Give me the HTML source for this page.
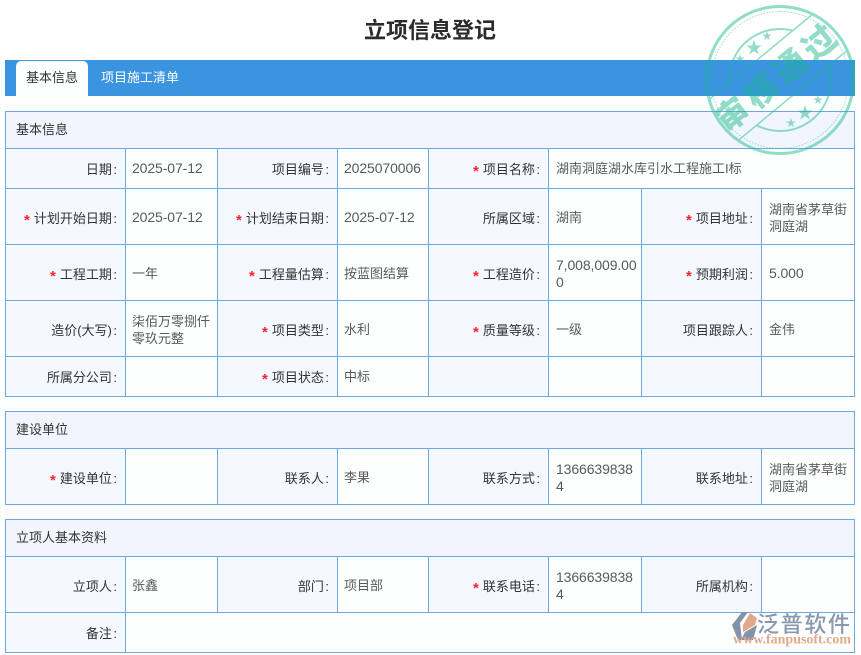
<!DOCTYPE html>
<html lang="zh"><head><meta charset="utf-8"><title>立项信息登记</title>
<style>
html,body{margin:0;padding:0}
body{width:861px;height:655px;position:relative;overflow:hidden;background:#fdffff;font-family:"Liberation Sans","Noto Sans CJK SC",sans-serif;font-size:13px;color:#333}
h1{position:absolute;left:0;top:16px;width:860px;margin:0;text-align:center;font-size:22px;line-height:30px;font-weight:bold;color:#2b2b2b}
.top{position:absolute;left:0;top:0;width:861px;height:60px;background:#fff}
.bar{position:absolute;left:5px;top:60px;width:850px;height:36px;background:#3a94df}
.tab{position:absolute;top:1px;height:35px;line-height:33px;font-size:13px}
.t1{left:11px;width:72px;background:#fdffff;border-radius:5px 5px 0 0;text-align:center;color:#333}
.t2{left:96px;color:#fff}
table{position:absolute;left:5px;width:849px;table-layout:fixed;border-collapse:collapse}
td{border:1px solid #6fa8dc;padding:2px 0 0;overflow:hidden;line-height:17px}
tr.t td{padding-top:4px}
td.h{background:#f1f6fe;padding:0 0 2px 10px;color:#333}
td.l{background:#f3f9ff;text-align:right;padding-right:8px;color:#333}
td.l b{font-weight:normal;margin-left:1.5px}
td.v{background:#fdffff;padding-left:6px;padding-right:2px;color:#5a5a5a}
td.w{padding-left:7px}
td.v span{position:relative;top:-1px}
td.v u{text-decoration:none;font-size:14px;letter-spacing:-.1px}
i{font-style:normal;font-weight:bold;color:#f5222d;margin-right:4px;font-size:15px;line-height:13px;position:relative;top:2px}
svg{position:absolute}
</style></head><body>
<div class="top"></div>
<h1>立项信息登记</h1>
<div class="bar"><div class="tab t1">基本信息</div><div class="tab t2">项目施工清单</div></div>

<table style="top:111px">
<colgroup><col style="width:120px"><col style="width:92px"><col style="width:120px"><col style="width:91px"><col style="width:120px"><col style="width:93px"><col style="width:120px"><col style="width:93px"></colgroup>
<tr style="height:37px"><td class="h" colspan="8">基本信息</td></tr>
<tr style="height:40px"><td class="l">日期<b>:</b></td><td class="v"><span><u>2025-07-12</u></span></td><td class="l">项目编号<b>:</b></td><td class="v"><span><u>2025070006</u></span></td><td class="l"><i>*</i>项目名称<b>:</b></td><td class="v w" colspan="3"><span>湖南洞庭湖水库引水工程施工I标</span></td></tr>
<tr class="t" style="height:56px"><td class="l"><i>*</i>计划开始日期<b>:</b></td><td class="v"><span><u>2025-07-12</u></span></td><td class="l"><i>*</i>计划结束日期<b>:</b></td><td class="v"><span><u>2025-07-12</u></span></td><td class="l">所属区域<b>:</b></td><td class="v w"><span>湖南</span></td><td class="l"><i>*</i>项目地址<b>:</b></td><td class="v w"><span>湖南省茅草街<br>洞庭湖</span></td></tr>
<tr class="t" style="height:56px"><td class="l"><i>*</i>工程工期<b>:</b></td><td class="v"><span>一年</span></td><td class="l"><i>*</i>工程量估算<b>:</b></td><td class="v"><span>按蓝图结算</span></td><td class="l"><i>*</i>工程造价<b>:</b></td><td class="v w"><span><u>7,008,009.00<br>0</u></span></td><td class="l"><i>*</i>预期利润<b>:</b></td><td class="v w"><span><u>5.000</u></span></td></tr>
<tr class="t" style="height:56px"><td class="l">造价(大写)<b>:</b></td><td class="v"><span>柒佰万零捌仟<br>零玖元整</span></td><td class="l"><i>*</i>项目类型<b>:</b></td><td class="v"><span>水利</span></td><td class="l"><i>*</i>质量等级<b>:</b></td><td class="v w"><span>一级</span></td><td class="l">项目跟踪人<b>:</b></td><td class="v w"><span>金伟</span></td></tr>
<tr style="height:40px"><td class="l">所属分公司<b>:</b></td><td class="v"></td><td class="l"><i>*</i>项目状态<b>:</b></td><td class="v"><span>中标</span></td><td class="l"></td><td class="v"></td><td class="l"></td><td class="v"></td></tr>
</table>

<table style="top:411px">
<colgroup><col style="width:120px"><col style="width:92px"><col style="width:120px"><col style="width:91px"><col style="width:120px"><col style="width:93px"><col style="width:120px"><col style="width:93px"></colgroup>
<tr style="height:37px"><td class="h" colspan="8">建设单位</td></tr>
<tr class="t" style="height:56px"><td class="l"><i>*</i>建设单位<b>:</b></td><td class="v"></td><td class="l">联系人<b>:</b></td><td class="v"><span>李果</span></td><td class="l">联系方式<b>:</b></td><td class="v w"><span><u>1366639838<br>4</u></span></td><td class="l">联系地址<b>:</b></td><td class="v w"><span>湖南省茅草街<br>洞庭湖</span></td></tr>
</table>

<table style="top:519px">
<colgroup><col style="width:120px"><col style="width:92px"><col style="width:120px"><col style="width:91px"><col style="width:120px"><col style="width:93px"><col style="width:120px"><col style="width:93px"></colgroup>
<tr style="height:37px"><td class="h" colspan="8">立项人基本资料</td></tr>
<tr class="t" style="height:56px"><td class="l">立项人<b>:</b></td><td class="v"><span>张鑫</span></td><td class="l">部门<b>:</b></td><td class="v"><span>项目部</span></td><td class="l"><i>*</i>联系电话<b>:</b></td><td class="v w"><span><u>1366639838<br>4</u></span></td><td class="l">所属机构<b>:</b></td><td class="v"></td></tr>
<tr style="height:40px"><td class="l">备注<b>:</b></td><td class="v" colspan="7"></td></tr>
</table>

<svg style="left:700px;top:0" width="161" height="160" viewBox="700 0 161 160">
<defs>
<clipPath id="cp"><rect x="-80" y="-80" width="160" height="50"/><rect x="-80" y="20" width="160" height="60"/></clipPath>
<polygon id="st" points="0,-10 2.4,-3.1 9.5,-3.1 3.8,1.2 5.9,8.1 0,3.9 -5.9,8.1 -3.8,1.2 -9.5,-3.1 -2.4,-3.1"/>
</defs>
<g opacity=".48">
<g fill="none" stroke="#1eb98c">
<circle cx="780" cy="80" r="73.5" stroke-width="3"/>
<circle cx="780" cy="80" r="68.5" stroke-width="1" stroke-dasharray="1.5 1.5"/>
<g transform="translate(780 80) rotate(-39.5)">
<circle cx="0" cy="0" r="51" stroke-width="2" clip-path="url(#cp)"/>
<line x1="-66" y1="-30" x2="66" y2="-30" stroke-width="1.6"/>
<line x1="-69" y1="20" x2="69" y2="20" stroke-width="1.6"/>
</g>
</g>
<g fill="#1eb98c">
<use href="#st" transform="translate(754 48) scale(.8)"/>
<use href="#st" transform="translate(740 59) scale(.5)"/>
<use href="#st" transform="translate(767 36) scale(.5)"/>
<use href="#st" transform="translate(805 113) scale(.8)"/>
<use href="#st" transform="translate(791 123) scale(.5)"/>
<use href="#st" transform="translate(818 100) scale(.5)"/>
<text transform="translate(780 80) rotate(-39.5)" x="0" y="8" text-anchor="middle" font-family="'Noto Sans CJK SC',sans-serif" font-weight="900" font-size="33" letter-spacing="4.6">审核通过</text>
</g>
</g>
</svg>

<svg style="left:725px;top:605px" width="136" height="50" viewBox="725 605 136 50">
<path d="M732 625 L742 612 L748 612 L740 623 L742 640 L738 640 Z" fill="#8592ab"/>
<path d="M741 640 L745 632 L757 625 L753 640 Z" fill="#8592ab"/>
<path d="M743 625 L750 613 L757 618 L755 625 L743 632 Z" fill="#e3a88a"/>
<text x="757" y="632" font-family="'Noto Sans CJK SC',sans-serif" font-weight="500" font-size="22" fill="#8a97ae" textLength="93" lengthAdjust="spacing">泛普软件</text>
<text x="733" y="643.5" font-family="'Liberation Serif',serif" font-weight="bold" font-size="14" fill="#e2a98d" textLength="118" lengthAdjust="spacing">www.fanpusoft.com</text>
</svg>
</body></html>
